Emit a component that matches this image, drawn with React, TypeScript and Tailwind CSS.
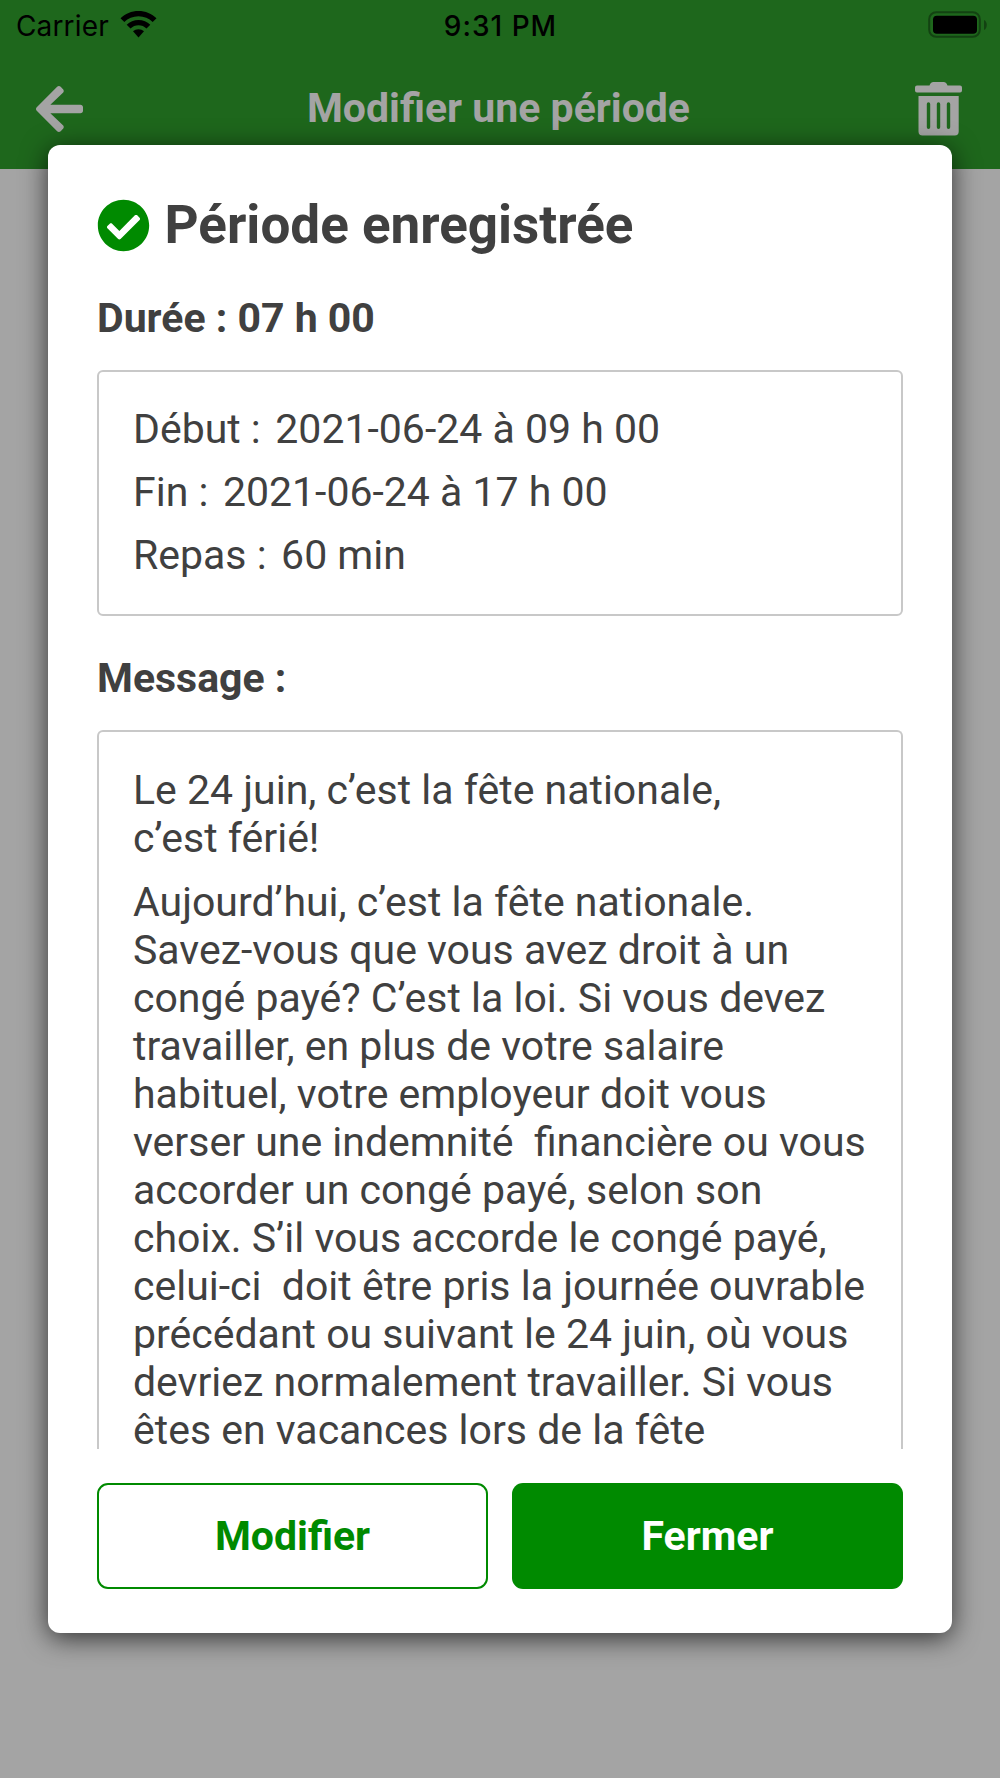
import { FaArrowLeft, FaCheckCircle } from "react-icons/fa";

const details = [
  ["Début :", "2021-06-24 à 09 h 00"],
  ["Fin :", "2021-06-24 à 17 h 00"],
  ["Repas :", "60 min"],
];

const intro = ["Le 24 juin, c’est la fête nationale,", "c’est férié!"];

const body = [
  "Aujourd’hui, c’est la fête nationale.",
  "Savez-vous que vous avez droit à un",
  "congé payé? C’est la loi. Si vous devez",
  "travailler, en plus de votre salaire",
  "habituel, votre employeur doit vous",
  "verser une indemnité  financière ou vous",
  "accorder un congé payé, selon son",
  "choix. S’il vous accorde le congé payé,",
  "celui-ci  doit être pris la journée ouvrable",
  "précédant ou suivant le 24 juin, où vous",
  "devriez normalement travailler. Si vous",
  "êtes en vacances lors de la fête",
];

function WifiIcon() {
  return (
    <svg className="mb-[2px] ml-[11px] h-[27px] w-[37px]" viewBox="0 0 37 27">
      <path d="M18.500 0C25.400 0 31.900 2.700 36.500 7.300L32.700 11.100C29 7.400 24 5.300 18.500 5.300S8 7.400 4.300 11.100L.5 7.300C5.100 2.700 11.600 0 18.500 0Z" />
      <path d="M18.500 8.900C23 8.900 27.200 10.700 30.300 13.700L26.500 17.500C24.400 15.400 21.500 14.200 18.500 14.200S12.600 15.400 10.500 17.500L6.700 13.700C9.800 10.700 14 8.900 18.500 8.900Z" />
      <path d="M18.500 18.200C20.600 18.200 22.600 19 24 20.300L18.500 26.500L13 20.300C14.400 19 16.400 18.200 18.500 18.200Z" />
    </svg>
  );
}

function BatteryIcon() {
  return (
    <svg className="mb-[2px] h-[28px] w-[60px]" viewBox="0 0 60 28">
      <rect x="1.200" y="1.200" width="50.600" height="24.600" rx="7" fill="none" stroke="#134212" strokeWidth="2" />
      <rect x="5" y="4.700" width="44" height="18" rx="3.800" />
      <path d="M56 9C59.700 10.700 59.700 17.300 56 19Z" fill="#134212" />
    </svg>
  );
}

function TrashIcon() {
  return (
    <svg className="h-[54px] w-[47px]" viewBox="0 0 47 54" fill="currentColor">
      <path d="M2 3.500H14.500C15.300 1.200 16.300 0 18.500 0H28.500C30.700 0 31.700 1.200 32.500 3.500H45A2 2 0 0 1 47 5.500V8.500A2 2 0 0 1 45 10.500H2A2 2 0 0 1 0 8.500V5.500A2 2 0 0 1 2 3.500Z" />
      <path
        fillRule="evenodd"
        d="M3.500 14H43.700V49.500A4 4 0 0 1 39.700 53.500H7.500A4 4 0 0 1 3.500 49.500ZM13.500 20.300A1.700 1.700 0 0 0 11.800 22V45.300A1.700 1.700 0 0 0 15.200 45.300V22A1.700 1.700 0 0 0 13.500 20.300ZM23.500 20.300A1.700 1.700 0 0 0 21.800 22V45.300A1.700 1.700 0 0 0 25.200 45.300V22A1.700 1.700 0 0 0 23.500 20.300ZM33.500 20.300A1.700 1.700 0 0 0 31.800 22V45.300A1.700 1.700 0 0 0 35.200 45.300V22A1.700 1.700 0 0 0 33.500 20.300Z"
      />
    </svg>
  );
}

export default function App() {
  return (
    <div className="h-[1778px] w-[1000px] overflow-hidden bg-[#a4a4a4] font-[Roboto,sans-serif] text-[41px] leading-[48px] text-[#404040]">
      <header className="h-[169px] bg-[#1e671c]">
        <div className="flex h-[51px] items-center justify-between pr-[12px] pl-[16px] font-[Inter,sans-serif] text-[28px] leading-[34px] text-black">
          <div className="flex flex-1 items-center">
            <span className="tracking-[0.150px]">Carrier</span>
            <WifiIcon />
          </div>
          <div className="mr-[3px] text-center font-medium tracking-[1px]">9:31 PM</div>
          <div className="flex flex-1 justify-end">
            <BatteryIcon />
          </div>
        </div>
        <div className="flex h-[116px] items-center justify-between pr-[38px] pl-[36px] text-[#a4a4a4]">
          <FaArrowLeft className="h-[54px] w-[47px]" />
          <h1 className="mr-px mb-[2px] font-bold">Modifier une période</h1>
          <TrashIcon />
        </div>
      </header>

      <main className="relative mx-auto -mt-[24px] flex h-[1488px] w-[903.500px] flex-col rounded-[12px] bg-white px-[48.750px] shadow-[0_5px_27px_rgba(0,0,0,0.700)]">
        <div className="flex h-[112px] items-center gap-[14.500px] pt-[48px]">
          <FaCheckCircle className="size-[53px] text-[#008a00]" />
          <h2 className="text-[53px] leading-[64px] font-bold">Période enregistrée</h2>
        </div>
        <p className="mt-[37px] mb-px h-[48px] font-bold">Durée : 07 h 00</p>
        <section className="mt-[27px] h-[246px] rounded-[6px] border-2 border-[#c8c8c8] px-[34px] pt-[33px]">
          {details.map(([label, value]) => (
            <p key={label} className="mb-[15px] flex h-[48px] gap-[14.500px]">
              <span>{label}</span>
              <span>{value}</span>
            </p>
          ))}
        </section>
        <p className="mt-[38px] mb-px h-[48px] font-bold">Message :</p>
        <section className="mt-[27px] h-[719px] rounded-t-[6px] border-2 border-b-0 border-[#c8c8c8] px-[34px] pt-[34px] leading-[48.060px] whitespace-pre">
          <p className="mb-[15.500px]">
            {intro.map((line) => (
              <span key={line} className="block">{line}</span>
            ))}
          </p>
          <p>
            {body.map((line) => (
              <span key={line} className="block">{line}</span>
            ))}
          </p>
        </section>
        <div className="mt-[34px] grid grid-cols-2 gap-[24px]">
          <button className="h-[106px] rounded-[11px] border-2 border-[#008a00] font-bold text-[#008a00]">Modifier</button>
          <button className="h-[106px] rounded-[11px] bg-[#008a00] font-bold text-white">Fermer</button>
        </div>
      </main>
    </div>
  );
}
